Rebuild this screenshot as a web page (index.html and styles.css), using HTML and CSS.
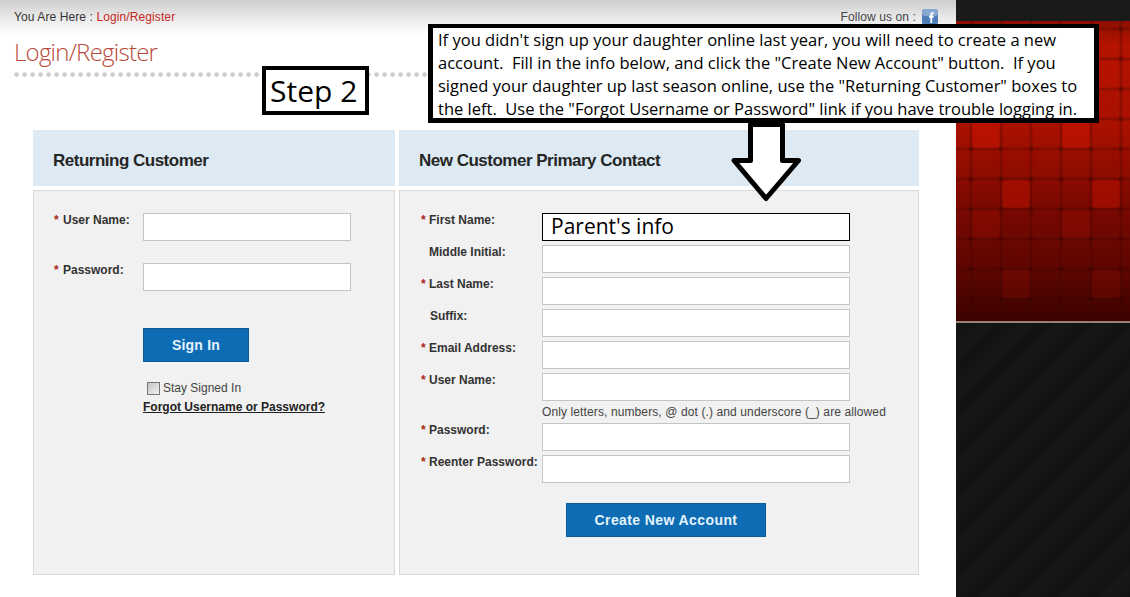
FILE: index.html
```html
<!DOCTYPE html>
<html lang="en">
<head>
    <meta charset="UTF-8">
    <meta name="viewport" content="width=device-width, initial-scale=1.0">
    <title>Login/Register</title>
    <link rel="stylesheet" href="styles.css">
</head>
<body>
    <div class="page">
        <main class="main">
            <div class="topbar">
                <div class="crumbs">You Are Here : <a href="#">Login/Register</a></div>
                <div class="follow">
                    Follow us on :
                    <svg class="fb" viewBox="0 0 16 16" aria-hidden="true">
                        <rect width="16" height="16" rx="3" fill="#4f7db8"/>
                        <rect width="16" height="7" rx="3" fill="#86a8d2"/>
                        <path d="M8.4 14V8.7H7V6.8h1.4V5.5c0-1.5.8-2.3 2.2-2.3h1.2v1.9h-.8c-.6 0-.8.3-.8.8v.9h1.6l-.2 1.9h-1.4V14z" fill="#fff"/>
                    </svg>
                </div>
            </div>
            <h1 class="title">Login/Register</h1>
            <div class="dots"></div>

            <div class="panels">
                <section class="panel panel-left">
                    <h2>Returning Customer</h2>
                    <form class="panel-body login-form">
                        <label class="req">User Name:</label>
                        <input type="text">
                        <label class="req">Password:</label>
                        <input type="password">
                        <div class="login-actions">
                            <button type="button" class="btn btn-signin">Sign In</button>
                            <label class="stay"><span class="check"></span>Stay Signed In</label>
                            <a href="#" class="forgot">Forgot Username or Password?</a>
                        </div>
                    </form>
                </section>

                <section class="panel panel-right">
                    <h2>New Customer Primary Contact</h2>
                    <form class="panel-body signup-form">
                        <label class="req">First Name:</label>
                        <input type="text">
                        <label>Middle Initial:</label>
                        <input type="text">
                        <label class="req">Last Name:</label>
                        <input type="text">
                        <label class="suffix">Suffix:</label>
                        <input type="text">
                        <label class="req">Email Address:</label>
                        <input type="text">
                        <label class="req">User Name:</label>
                        <input type="text">
                        <p class="hint">Only letters, numbers, @ dot (.) and underscore (_) are allowed</p>
                        <label class="req">Password:</label>
                        <input type="password">
                        <label class="req">Reenter Password:</label>
                        <input type="password">
                        <button type="button" class="btn btn-create">Create New Account</button>
                    </form>
                </section>
            </div>
        </main>

        <aside class="side">
            <div class="side-top"></div>
            <svg class="side-tiles" viewBox="0 0 174 300" preserveAspectRatio="none" aria-hidden="true">
                <defs>
                    <linearGradient id="redFade" x1="0" y1="0" x2="0" y2="1">
                        <stop offset="0" stop-color="#8d0f00"/>
                        <stop offset="0.08" stop-color="#b31300"/>
                        <stop offset="0.36" stop-color="#a81000"/>
                        <stop offset="0.6" stop-color="#7d0900"/>
                        <stop offset="0.85" stop-color="#5a0500"/>
                        <stop offset="1" stop-color="#3c0200"/>
                    </linearGradient>
                    <pattern id="grid" x="15" y="8" width="30" height="30" patternUnits="userSpaceOnUse">
                        <rect x="0" y="0" width="30" height="30" fill="none" stroke="#3a0200" stroke-opacity="0.25" stroke-width="3"/>
                        <circle cx="0" cy="0" r="2.5" fill="#300100" fill-opacity="0.35"/>
                        <circle cx="30" cy="0" r="2.5" fill="#300100" fill-opacity="0.35"/>
                        <circle cx="0" cy="30" r="2.5" fill="#300100" fill-opacity="0.35"/>
                        <circle cx="30" cy="30" r="2.5" fill="#300100" fill-opacity="0.35"/>
                    </pattern>
                </defs>
                <rect width="174" height="300" fill="url(#redFade)"/>
                <g fill="#e01800" fill-opacity="0.3">
                    <rect x="16" y="99" width="28" height="28" rx="3"/>
                    <rect x="106" y="99" width="28" height="28" rx="3"/>
                    <rect x="46" y="159" width="28" height="28" rx="3"/>
                    <rect x="136" y="159" width="28" height="28" rx="3"/>
                </g>
                <g fill="#e01800" fill-opacity="0.12">
                    <rect x="46" y="39" width="28" height="28" rx="3"/>
                    <rect x="136" y="39" width="28" height="28" rx="3"/>
                    <rect x="16" y="189" width="28" height="28" rx="3"/>
                    <rect x="106" y="189" width="28" height="28" rx="3"/>
                    <rect x="46" y="249" width="28" height="28" rx="3"/>
                    <rect x="136" y="249" width="28" height="28" rx="3"/>
                </g>
                <rect width="174" height="300" fill="url(#grid)"/>
            </svg>
            <div class="side-line"></div>
            <div class="side-bottom"></div>
        </aside>
    </div>

    <!-- notes pasted on top of the screenshot -->
    <div class="note note-step">Step 2</div>
    <div class="note note-help">If you didn't sign up your daughter online last year, you will need to create a new
account.  Fill in the info below, and click the "Create New Account" button.  If you
signed your daughter up last season online, use the "Returning Customer" boxes to
the left.  Use the "Forgot Username or Password" link if you have trouble logging in.</div>
    <svg class="note-arrow" viewBox="0 0 74 84" aria-hidden="true">
        <path d="M21.5 2.5V38.5H5L37 76.5 69.500 38.5H53.5V2.5Z" fill="#fff" stroke="#000" stroke-width="5" stroke-linejoin="round"/>
    </svg>
    <div class="note-parent">Parent's info</div>
</body>
</html>
```

FILE: styles.css
```css
* {
    box-sizing: border-box;
}
html, body {
    margin: 0;
    padding: 0;
    height: 100%;
    overflow: hidden;
}
body {
    font-family: "Liberation Sans", Arial, sans-serif;
    background-color: #fff;
    color: #333;
    position: relative;
}
.page {
    display: flex;
    height: 597px;
}

/* main column */
.main {
    width: 956px;
    flex: none;
    background: linear-gradient(#cdcdcd 0, #e4e4e4 14px, #fff 35px, #fff 100%);
}
.topbar {
    display: flex;
    justify-content: space-between;
    align-items: center;
    height: 16px;
    margin-top: 9px;
    padding: 0 18px 0 14px;
    font-size: 12px;
    letter-spacing: 0.1px;
    color: #333;
}
.crumbs a {
    color: #c8281e;
    text-decoration: none;
}
.follow {
    display: flex;
    align-items: center;
    gap: 6px;
    color: #444;
}
.fb {
    width: 16px;
    height: 16px;
}
.title {
    margin: 12px 0 0 14px;
    font-family: "Open Sans", sans-serif;
    font-weight: 300;
    font-size: 24px;
    line-height: 30px;
    letter-spacing: -0.75px;
    color: #b9483a;
}
.dots {
    height: 5px;
    margin: 5px 14px 0;
    background-image: radial-gradient(circle at 2.5px 2.5px, #cfcfcf 2px, transparent 2.5px);
    background-size: 8px 5px;
    background-repeat: repeat-x;
}

/* panels */
.panels {
    display: flex;
    gap: 4px;
    margin: 53px 0 0 33px;
}
.panel {
    display: flex;
    flex-direction: column;
    gap: 4px;
}
.panel-left {
    width: 362px;
}
.panel-right {
    width: 520px;
}
.panel h2 {
    margin: 0;
    height: 56px;
    padding: 0 20px;
    background-color: #deeaf3;
    font-size: 17px;
    line-height: 61px;
    font-weight: bold;
    letter-spacing: -0.5px;
    color: #262626;
}
.panel-body {
    height: 385px;
    background-color: #f1f1f1;
    border: 1px solid #d8d8d8;
}
label {
    font-size: 12px;
    font-weight: bold;
    color: #333;
    line-height: 14px;
}
.req::before {
    content: "*";
    display: inline-block;
    width: 9px;
    color: #a52a1a;
}
input {
    height: 28px;
    margin: 0;
    padding: 2px 4px;
    background-color: #fff;
    border: 1px solid #c4c4c4;
    border-radius: 0;
}

/* returning customer */
.login-form {
    display: grid;
    grid-template-columns: 89px 208px;
    grid-auto-rows: min-content;
    row-gap: 22px;
    padding: 22px 0 0 20px;
}
.login-actions {
    grid-column: 2;
    display: flex;
    flex-direction: column;
    align-items: flex-start;
    padding-top: 15px;
}
.btn {
    border: 1px solid #0d5c98;
    background-color: #0e6cb4;
    color: #e4f3fb;
    font-family: "Liberation Sans", Arial, sans-serif;
    font-weight: bold;
    font-size: 14px;
    letter-spacing: 0.4px;
    cursor: pointer;
}
.btn-signin {
    width: 106px;
    height: 34px;
    letter-spacing: 0.2px;
}
.stay {
    display: flex;
    align-items: center;
    gap: 3px;
    margin: 19px 0 0 4px;
    font-weight: normal;
    color: #444;
}
.check {
    width: 13px;
    height: 13px;
    border: 1px solid #777;
    background: linear-gradient(135deg, #c4c4c4, #f0f0f0);
}
.forgot {
    margin-top: 5px;
    font-size: 12px;
    font-weight: bold;
    color: #222;
}

/* new customer */
.signup-form {
    display: grid;
    grid-template-columns: 121px 308px;
    grid-auto-rows: min-content;
    row-gap: 4px;
    padding: 22px 0 0 21px;
}
.signup-form label {
    display: block;
}
.signup-form label:not(.req) {
    padding-left: 8px;
}
.signup-form label.suffix {
    padding-left: 9px;
}
.signup-form .req::before {
    width: 8px;
}
.hint {
    grid-column: 2;
    margin: 0;
    font-size: 12px;
    line-height: 14px;
    letter-spacing: 0.11px;
    white-space: nowrap;
    color: #444;
}
.btn-create {
    grid-column: 1 / span 2;
    justify-self: start;
    width: 200px;
    height: 34px;
    margin: 16px 0 0 145px;
}

/* right hand column */
.side {
    flex: 1;
    display: flex;
    flex-direction: column;
    background-color: #141414;
}
.side-top {
    height: 21px;
    background-color: #1a1a1a;
}
.side-tiles {
    display: block;
    width: 174px;
    height: 300px;
}
.side-line {
    height: 2px;
    background-color: #9a8078;
}
.side-bottom {
    flex: 1;
    background-image: repeating-linear-gradient(135deg, #131313 0, #131313 14px, #161616 14px, #161616 28px);
}

/* notes over the page */
.note {
    position: absolute;
    background-color: #fff;
    border: 4px solid #000;
    color: #000;
    font-family: "Open Sans", sans-serif;
}
.note-step {
    left: 262px;
    top: 66px;
    width: 107px;
    height: 49px;
    font-size: 30px;
    line-height: 42px;
    padding-left: 4px;
}
.note-help {
    left: 428px;
    top: 24px;
    width: 671px;
    height: 99px;
    border-width: 4px 5px 5px;
    padding: 0 0 0 5px;
    font-size: 16.5px;
    line-height: 23px;
    white-space: pre;
}
.note-arrow {
    position: absolute;
    left: 729px;
    top: 122px;
    width: 74px;
    height: 84px;
}
.note-parent {
    position: absolute;
    left: 542px;
    top: 213px;
    width: 308px;
    height: 28px;
    padding-left: 8px;
    background-color: #fff;
    border: 1px solid #000;
    font-family: "Open Sans", sans-serif;
    font-size: 21px;
    line-height: 25px;
    color: #000;
}
```
